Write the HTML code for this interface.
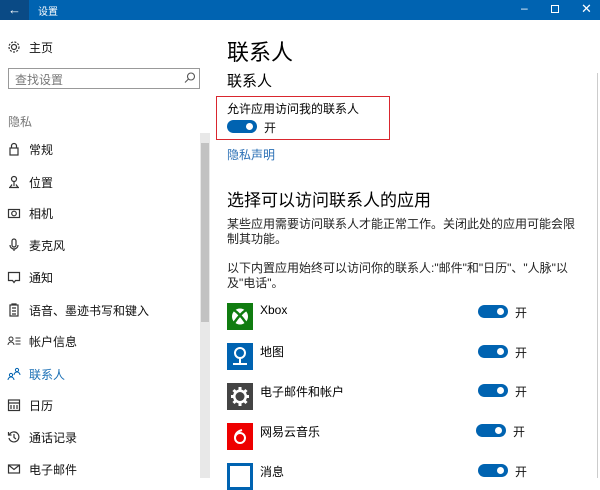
<!DOCTYPE html>
<html><head><meta charset="utf-8"><style>
*{margin:0;padding:0;box-sizing:border-box}
body{width:600px;height:478px;overflow:hidden;background:#fff;font-family:"Liberation Sans","Noto Sans CJK SC",sans-serif;color:#000;position:relative}
.a{position:absolute;white-space:nowrap}
.tb{position:absolute;left:0;top:0;width:600px;height:20px;background:#0063b1}
.back{position:absolute;left:0;top:0;width:29px;height:20px;background:#0a4a85;color:#fff;font-size:13px;text-align:center;line-height:19px}
.nav{font-size:12px;color:#111}
.ic{position:absolute;left:7px;width:14px;height:14px}
.ic svg{display:block}
.tg{position:absolute;width:30px;height:13px;border-radius:7px;background:#0063b1}
.tg::after{content:"";position:absolute;right:4px;top:3px;width:7px;height:7px;border-radius:50%;background:#fff}
.on{font-size:12px;color:#111}
.app{position:absolute;left:227px;width:26px;height:27px}
</style></head><body>
<div class="tb"></div>
<div class="back">←</div>
<div class="a" style="left:38px;top:3px;font-size:10px;color:#fff">设置</div>
<div class="a" style="left:521px;top:1px;color:#fff;font-size:12px">–</div>
<div class="a" style="left:551px;top:5px;width:8px;height:8px;border:1px solid #fff"></div>
<div class="a" style="left:581px;top:1px;color:#fff;font-size:13px">✕</div>

<div class="ic" style="top:40px"><svg width="14" height="14" fill="none" stroke="#333" stroke-width="1.2"><circle cx="7" cy="7" r="2.5"/><circle cx="7" cy="7" r="5" stroke-dasharray="2 1.4"/></svg></div>
<div class="a nav" style="left:29px;top:39px">主页</div>
<div class="a" style="left:8px;top:68px;width:192px;height:21px;border:1px solid #999"></div>
<div class="a" style="left:15px;top:71px;font-size:12px;color:#777">查找设置</div>
<div class="a" style="left:183px;top:71px;width:14px;height:14px"><svg width="14" height="14" fill="none" stroke="#555" stroke-width="1.1"><circle cx="8" cy="5.5" r="3.5"/><path d="M5.5 8l-3.5 3.5"/></svg></div>
<div class="a" style="left:8px;top:113px;font-size:12px;color:#777">隐私</div>

<div class="a" style="left:200px;top:133px;width:10px;height:345px;background:#e8e8e8"></div>
<div class="a" style="left:201px;top:143px;width:8px;height:179px;background:#c2c2c2"></div>

<div class="ic" style="top:142px"><svg width="14" height="14" fill="none" stroke="#333" stroke-width="1.2"><rect x="3" y="6" width="8" height="7"/><path d="M4.5 6V4a2.5 2.5 0 015 0v2"/></svg></div><div class="a nav" style="left:29px;top:141px">常规</div>
<div class="ic" style="top:175px"><svg width="14" height="14" fill="none" stroke="#333" stroke-width="1.2"><circle cx="7" cy="4" r="2.5"/><path d="M7 6.5V11M2 12.5h10M3 12.5l2-3M11 12.5l-2-3"/></svg></div><div class="a nav" style="left:29px;top:174px">位置</div>
<div class="ic" style="top:206px"><svg width="14" height="14" fill="none" stroke="#333" stroke-width="1.2"><rect x="1.5" y="3.5" width="11" height="8"/><circle cx="7" cy="7.5" r="2.3"/></svg></div><div class="a nav" style="left:29px;top:205px">相机</div>
<div class="ic" style="top:238px"><svg width="14" height="14" fill="none" stroke="#333" stroke-width="1.2"><rect x="5" y="1" width="4" height="8" rx="2"/><path d="M3 7a4 4 0 008 0M7 11v2"/></svg></div><div class="a nav" style="left:29px;top:237px">麦克风</div>
<div class="ic" style="top:270px"><svg width="14" height="14" fill="none" stroke="#333" stroke-width="1.2"><path d="M1.5 2.5h11v8h-4l-1.5 2-1.5-2h-4z"/></svg></div><div class="a nav" style="left:29px;top:269px">通知</div>
<div class="ic" style="top:303px"><svg width="14" height="14" fill="none" stroke="#333" stroke-width="1.2"><rect x="3" y="2" width="8" height="11"/><path d="M5 2V1h4v1M5 5h4M5 8h4M5 11h4"/></svg></div><div class="a nav" style="left:29px;top:302px">语音、墨迹书写和键入</div>
<div class="ic" style="top:334px"><svg width="14" height="14" fill="none" stroke="#333" stroke-width="1"><circle cx="4" cy="5" r="2"/><path d="M1 11a3 3 0 016 0M8.5 4h5M8.5 7h5M8.5 10h5"/></svg></div><div class="a nav" style="left:29px;top:333px">帐户信息</div>
<div class="ic" style="top:367px"><svg width="14" height="14" fill="none" stroke="#0063b1" stroke-width="1"><circle cx="4" cy="8" r="1.6"/><path d="M1 13a3 3 0 016 0"/><circle cx="10" cy="3" r="1.6"/><path d="M7 8a3 3 0 016 0"/></svg></div><div class="a nav" style="left:29px;top:366px;color:#1a6fb5">联系人</div>
<div class="ic" style="top:398px"><svg width="14" height="14" fill="none" stroke="#333" stroke-width="1.2"><rect x="1.5" y="2" width="11" height="10.5"/><path d="M1.5 5h11M4 7v4M7 7v4M10 7v4"/></svg></div><div class="a nav" style="left:29px;top:397px">日历</div>
<div class="ic" style="top:430px"><svg width="14" height="14" fill="none" stroke="#333" stroke-width="1.2"><path d="M2.5 4.5A5 5 0 112 8"/><path d="M1.5 2v3h3M7 4v3.5l2 1.5"/></svg></div><div class="a nav" style="left:29px;top:429px">通话记录</div>
<div class="ic" style="top:462px"><svg width="14" height="14" fill="none" stroke="#333" stroke-width="1.2"><rect x="1.5" y="3" width="11" height="8"/><path d="M1.5 3l5.5 4.5 5.5-4.5"/></svg></div><div class="a nav" style="left:29px;top:461px">电子邮件</div>

<div class="a" style="left:597px;top:73px;width:1px;height:405px;background:#ccc"></div>

<div class="a" style="left:227px;top:35px;font-size:22px">联系人</div>
<div class="a" style="left:227px;top:70px;font-size:15px">联系人</div>
<div class="a" style="left:216px;top:96px;width:174px;height:44px;border:1.5px solid #d9262e"></div>
<div class="a" style="left:227px;top:100px;font-size:12px">允许应用访问我的联系人</div>
<div class="tg" style="left:227px;top:120px"></div>
<div class="a on" style="left:264px;top:119px">开</div>
<div class="a" style="left:227px;top:146px;font-size:12px;color:#2a6fb5">隐私声明</div>
<div class="a" style="left:227px;top:186px;font-size:17px">选择可以访问联系人的应用</div>
<div class="a" style="left:227px;top:217px;font-size:12px;line-height:15px;color:#222">某些应用需要访问联系人才能正常工作。关闭此处的应用可能会限<br>制其功能。</div>
<div class="a" style="left:227px;top:261px;font-size:12px;line-height:15px;color:#222">以下内置应用始终可以访问你的联系人:"邮件"和"日历"、"人脉"以<br>及"电话"。</div>

<div class="app" style="top:303px;background:#107c10"><svg width="26" height="27"><circle cx="13" cy="13.5" r="8" fill="#fff"/><path d="M7 7 Q13 11 19 20 M19 7 Q13 11 7 20" stroke="#107c10" stroke-width="2.5" fill="none"/></svg></div>
<div class="a" style="left:260px;top:303px;font-size:12px">Xbox</div>
<div class="app" style="top:343px;background:#0063b1"><svg width="26" height="27"><circle cx="13" cy="10" r="5" fill="none" stroke="#fff" stroke-width="2"/><path d="M13 15v5M6 21h14" stroke="#fff" stroke-width="2"/></svg></div>
<div class="a" style="left:260px;top:343px;font-size:12px">地图</div>
<div class="app" style="top:383px;background:#444"><svg width="26" height="27"><path d="M13 4v19M4 13.5h18M6.5 7l13 13M19.5 7l-13 13" stroke="#fff" stroke-width="3"/><circle cx="13" cy="13.5" r="7" fill="#fff"/><circle cx="13" cy="13.5" r="4.5" fill="#444"/></svg></div>
<div class="a" style="left:260px;top:383px;font-size:12px">电子邮件和帐户</div>
<div class="app" style="top:423px;background:#e00"><svg width="26" height="27"><circle cx="13" cy="15" r="5" fill="none" stroke="#fff" stroke-width="2"/><path d="M15 7 Q8 9 8 15" stroke="#fff" stroke-width="2" fill="none"/></svg></div>
<div class="a" style="left:260px;top:423px;font-size:12px">网易云音乐</div>
<div class="app" style="top:463px;background:#fff;border:3px solid #0063b1"></div>
<div class="a" style="left:260px;top:463px;font-size:12px">消息</div>

<div class="tg" style="left:478px;top:305px"></div><div class="a on" style="left:515px;top:304px">开</div>
<div class="tg" style="left:478px;top:345px"></div><div class="a on" style="left:515px;top:344px">开</div>
<div class="tg" style="left:478px;top:384px"></div><div class="a on" style="left:515px;top:383px">开</div>
<div class="tg" style="left:476px;top:424px"></div><div class="a on" style="left:513px;top:423px">开</div>
<div class="tg" style="left:478px;top:464px"></div><div class="a on" style="left:515px;top:463px">开</div>
</body></html>
